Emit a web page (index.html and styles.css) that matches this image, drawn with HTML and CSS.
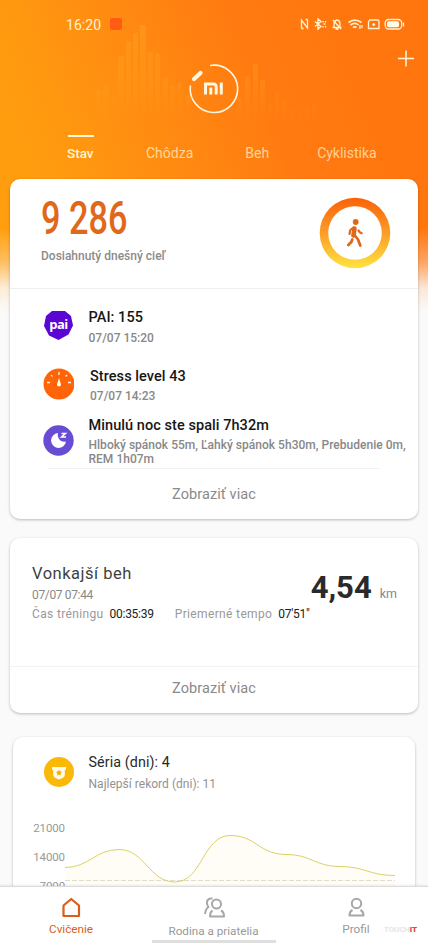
FILE: index.html
```html
<!DOCTYPE html>
<html lang="sk">
<head>
<meta charset="utf-8">
<meta name="viewport" content="width=device-width, initial-scale=1">
<title>Mi Fit</title>
<link rel="stylesheet" href="styles.css">
</head>
<body>
<div class="app">
  <svg class="skyline" viewBox="0 0 428 130" width="428" height="130" aria-hidden="true">
    <defs><linearGradient id="fade" x1="0" y1="20" x2="0" y2="122" gradientUnits="userSpaceOnUse"><stop offset="0" stop-color="#ffa621" stop-opacity=".46"/><stop offset=".6" stop-color="#ffa11b" stop-opacity=".3"/><stop offset="1" stop-color="#ffa11b" stop-opacity="0"/></linearGradient></defs>
    <path fill="url(#fade)" d="M96 90h5v28h-5zM103 84h6v34h-6zM111 96h6v22h-6zM118 56h6v62h-6zM126 41h5v77h-5zM133 33h5v85h-5zM140 25h6v93h-6zM148 52h5v66h-5zM155 54h5v64h-5zM163 77h5v41h-5zM170 85h5v33h-5zM178 83h5v37h-5zM186 94h5v26h-5zM237 98h5v22h-5zM245 76h5v44h-5zM253 64h5v56h-5zM260 80h5v40h-5zM268 104h4v16h-4zM275 93h4v27h-4zM282 102h4v18h-4zM290 110h4v10h-4zM298 111h4v9h-4zM305 107h4v13h-4zM312 104h4v16h-4z"/>
  </svg>
  <header class="status">
    <span class="clock">16:20</span>
    <span class="chip"></span>
    <svg class="status-icons" width="106" height="14" viewBox="0 0 106 14" fill="none" stroke="#fff3cf" stroke-width="1.300">
      <path d="M1.500 11.500V3L7.500 11V2.500M1.500 11.500h2M7.500 2.500h-2"/>
      <path d="M15 4.500l6 5-3 2.500V2l3 2.500-6 5M23 4v1.500M23 9v1.500M25.500 4v1.500M25.500 9v1.500M23.500 7h2"/>
      <path d="M32.500 10.500h9M34 10V6.500q.5-3 3-3.500 3 .500 3 4v3M35.500 12h3M33 3l8 9"/>
      <path d="M48.500 5.500q6.500-4.800 13 0M50.500 8q4.500-3.200 8 0M53 10.500q1.800-1.300 3.500 0" stroke-width="1.600"/><path d="M60 8v4M62 8v3"/>
      <path d="M70 3h7.500q1.500 0 1.500 1.500V11.500H68.500V4.500z"/><path d="M73.700 6v3M72.200 7.500h3"/>
      <rect x="85.200" y="2.500" width="16.500" height="9.500" rx="3.500"/><rect x="87" y="4.200" width="12" height="6" rx="1.800" fill="#fffde9" stroke="none"/><path d="M103.500 5.500v4"/>
    </svg>
  </header>
  <div class="hero">
    <svg class="logo" width="50" height="50" viewBox="0 0 50 50" fill="none" stroke="#fff7df">
      <path d="M21 1.500A23.700 23.700 0 1 1 1.500 21.500" stroke-width="1.600"/>
      <path d="M5 15l6.500-6" stroke-width="4.200" stroke-linecap="round"/>
      <path d="M16.500 30.500V20H24.500q2.700 0 2.700 3V30.500M21.800 23.500v7M32.300 18.500v12" stroke-width="3"/>
    </svg>
    <svg class="plus" width="18" height="18" viewBox="0 0 18 18" stroke="#fff3d3" stroke-width="1.600"><path d="M9 1.500v16M1 9.500h16"/></svg>
  </div>
  <nav class="tabs">
    <span class="tab active">Stav</span><span class="tab">Chôdza</span><span class="tab">Beh</span><span class="tab">Cyklistika</span>
  </nav>

  <section class="card daily">
    <div class="summary">
      <div><div class="steps">9 286</div><div class="goal">Dosiahnutý dnešný cieľ</div></div>
      <svg class="ring" width="72" height="72" viewBox="0 0 72 72">
        <defs><linearGradient id="ringfill" x1="0" y1="0" x2="0" y2="1"><stop stop-color="#fa6108"/><stop offset=".5" stop-color="#fc9d28"/><stop offset=".85" stop-color="#fdcf38"/><stop offset="1" stop-color="#ffe33d"/></linearGradient></defs>
        <path fill="url(#ringfill)" fill-rule="evenodd" d="M36 .7a35.300 35.300 0 1 0 0 70.600a35.300 35.300 0 1 0 0-70.600zM36 9.200a26.800 26.800 0 1 1 0 53.600a26.800 26.800 0 1 1 0-53.600z"/>
        <g stroke="#df681b" fill="none" stroke-linecap="round" stroke-linejoin="round"><circle cx="36.700" cy="25" r="2.900" fill="#df681b" stroke="none"/><path d="M35.500 31.500l-1 7" stroke-width="4.600"/><path d="M34.500 30.500l-3.200 2.500-.8 4M39.500 33.500l1.200 1.700 2 1" stroke-width="2.200"/><path d="M35.500 38l3.500 4.500 2.300 6M33.300 42.500l-1 2.500-3 3" stroke-width="2.800"/></g>
      </svg>
    </div>
    <div class="entries">
      <div class="entry pai-row">
        <svg class="badge" width="32" height="32" viewBox="0 0 32 32"><path d="M10 2h13l6 5 2 9.500-4.500 9L16.500 31 7 26.500 2 17 4 7z" fill="#5b06d2"/><text class="pai-text" x="16.500" y="20" text-anchor="middle">pai</text></svg>
        <div><h3>PAI: 155</h3><p>07/07 15:20</p></div>
      </div>
      <div class="entry stress-row">
        <svg class="badge" width="32" height="32" viewBox="0 0 32 32"><circle cx="17" cy="16" r="15.500" fill="#ff6408"/><path d="M5 14.500h3M26 14.500h3M17 4v3M9 7l1.500 1.500M25 7l-1.500 1.500" stroke="#fff2d8" stroke-width="1.300"/><path d="M17 10l2 6.500a2 2 0 1 1-4 0z" fill="#fffbe8"/></svg>
        <div><h3>Stress level 43</h3><p>07/07 14:23</p></div>
      </div>
      <div class="entry sleep-row">
        <svg class="badge" width="32" height="32" viewBox="0 0 32 32"><circle cx="16.500" cy="16.500" r="15.200" fill="#684cd4"/><path d="M16 9a7.500 7.500 0 1 0 8 8.500q-5 1-7-2.500t-1-6z" fill="#fff"/><path d="M19.500 9.500h4l-4 3.500h4.500" fill="none" stroke="#fff" stroke-width="1.500"/></svg>
        <div><h3>Minulú noc ste spali 7h32m</h3><p>Hlboký spánok 55m, Ľahký spánok 5h30m, Prebudenie 0m,<br>REM 1h07m</p></div>
      </div>
    </div>
    <div class="more">Zobraziť viac</div>
  </section>

  <section class="card run">
    <div class="run-body">
      <div class="run-info">
        <h2>Vonkajší beh</h2>
        <div class="date">07/07 07:44</div>
        <div class="stats"><span class="label">Čas tréningu</span><b class="time">00:35:39</b><span class="label pace">Priemerné tempo</span><b class="pace-value">07'51"</b></div>
      </div>
      <div class="distance"><strong>4,54</strong><span>km</span></div>
    </div>
    <div class="more">Zobraziť viac</div>
  </section>

  <section class="card streak">
    <div class="streak-head">
      <svg width="30" height="30" viewBox="0 0 30 30"><circle cx="15" cy="15" r="15" fill="#fab809"/><path d="M8 10h14v2.800h-1.200v5.200q0 2.500-5.800 4.500Q9.200 20.500 9.200 18v-5.200H8z" fill="#fffbe8"/><path d="M15 12.500l1 1.900 2.100.3-1.500 1.500.3 2.200-1.900-1-1.900 1 .3-2.200-1.500-1.500 2.100-.3z" fill="#f0ae0b"/></svg>
      <div><h2>Séria (dni): 4</h2><p>Najlepší rekord (dni): 11</p></div>
    </div>
    <div class="chart">
      <div class="axis"><span>21000</span><span>14000</span><span>7000</span></div>
      <svg width="330" height="66" viewBox="0 0 330 66" fill="none">
        <path d="M0 46.500C24 46.500 30 28.500 54 28.500C80 28.500 84 61 110 61C137 61 138 14.500 165 14.500C192 14.500 193 33.500 222 33.500C246 33.500 250 45.500 275 45.500C300 45.500 304 54.500 330 54.500V66H0z" fill="#fffdf5"/>
        <path d="M0 59.500h330" stroke="#dedbd0" stroke-dasharray="5 2"/>
        <path d="M0 46.500C24 46.500 30 28.500 54 28.500C80 28.500 84 61 110 61C137 61 138 14.500 165 14.500C192 14.500 193 33.500 222 33.500C246 33.500 250 45.500 275 45.500C300 45.500 304 54.500 330 54.500" stroke="#ddd064"/>
      </svg>
    </div>
  </section>

  <footer class="bottom">
    <div class="nav-item selected"><svg width="22" height="22" viewBox="0 0 22 22" fill="none" stroke="#dc5c18" stroke-width="2.200" stroke-linejoin="round"><path d="M3.500 19V8.500L11.200 2 19 8.500V19z"/></svg><span>Cvičenie</span></div>
    <div class="nav-item family"><svg width="24" height="22" viewBox="0 0 24 22" fill="none" stroke="#a8a8a8" stroke-width="2" stroke-linejoin="round"><circle cx="14.500" cy="7" r="4.500"/><path d="M10.500 13.500q-2.500 1.500-2.500 6h14q0-4.500-3-6M10.500 1.500Q6 .8 5 4.500q-.5 3 1.500 5.500-3 2-3.500 7"/></svg><span>Rodina a priatelia</span></div>
    <div class="nav-item profile"><svg width="20" height="22" viewBox="0 0 20 22" fill="none" stroke="#a8a8a8" stroke-width="2" stroke-linejoin="round"><circle cx="10.500" cy="6.500" r="4.700"/><path d="M6.500 13Q3.500 14.500 3.500 18.500h14q0-4-3-5.500"/></svg><span>Profil</span></div>
    <div class="watermark">TOUCH<b>IT</b></div>
    <div class="home-bar"></div>
  </footer>
</div>
</body>
</html>
```

FILE: styles.css
```css
* { box-sizing: border-box; }
body { margin: 0; background: #fafafa; font-family: Roboto, "Liberation Sans", sans-serif; }
h2, h3, p { margin: 0; }
svg { display: block; flex: none; }
.app {
  position: relative; width: 428px; height: 943px; overflow: hidden;
  background:
    linear-gradient(to bottom, rgba(250,250,250,0) 228px, rgba(250,250,250,.35) 262px, rgba(250,250,250,.85) 288px, #fafafa 312px),
    linear-gradient(68deg, #ffa00e 0, #ff9b0f 110px, #ff8a12 230px, #ff7b11 330px, #ff760f 430px) top / 428px 330px no-repeat #fafafa;
}
.skyline { position: absolute; top: 0; left: 0; }
.status { position: relative; display: flex; align-items: center; height: 48px; padding-left: 66px; }
.clock { width: 35px; padding-top: 1px; color: #fff3d2; font-size: 14px; letter-spacing: .05px; white-space: nowrap; }
.chip { width: 12px; height: 12px; margin-left: 9px; border-radius: 2px; background: #ff5b12; }
.status-icons { margin-left: 178px; }
.hero { position: relative; display: flex; height: 84px; padding: 16px 13px 0 189px; justify-content: space-between; }
.plus { margin-top: -15px; }
.tabs { position: relative; display: flex; height: 48px; padding-left: 67px; color: rgba(255,246,205,.72); font-size: 14px; line-height: 16px; }
.tab { padding-top: 13px; }
.tab:nth-child(2) { margin-left: 52px; }
.tab:nth-child(3) { margin-left: 52px; }
.tab:nth-child(4) { margin-left: 48px; }
.tab.active { position: relative; color: #fff6cf; font-weight: 500; font-size: 13.500px; width: 27px; }
.tab.active::before { content: ""; position: absolute; top: 3px; left: 1px; width: 26px; height: 2px; background: #fff8d9; }
.card { position: relative; width: 408px; margin: 0 auto; background: #fff; border-radius: 10px; box-shadow: 0 1px 3px rgba(0,0,0,.26); }
.daily { height: 340px; margin-top: -1px; }
.summary { display: flex; justify-content: space-between; height: 110px; padding: 15px 27px 0 31px; border-bottom: 1px solid #efefef; }
.ring { margin-top: 3px; }
.steps { width: 130px; height: 48px; color: #df681b; font-size: 46px; font-weight: 500; line-height: 48px; white-space: nowrap; transform: scaleX(.745); transform-origin: left; }
.goal { margin-top: 7px; color: #8b8b8b; font-size: 12px; font-weight: 500; line-height: 14px; }
.entries { height: 180px; margin: 0 38px; border-bottom: 1px solid #f3f3f3; }
.entry { display: flex; white-space: nowrap; margin-left: -6px; }
.entry > div { padding-left: .5px; }
.entry h3 { color: #171717; font-size: 14.500px; font-weight: 500; line-height: 18px; letter-spacing: .06px; }
.entry p { color: #888; font-size: 12px; font-weight: 500; line-height: 14px; letter-spacing: 0; }
.pai-row { padding-top: 20px; height: 79px; gap: 14px; }
.pai-row p { margin-top: 4px; }
.stress-row { height: 49px; gap: 15px; }
.stress-row > div { padding-left: 1px; }
.stress-row p { margin-top: 3px; }
.sleep-row { gap: 14px; }
.sleep-row .badge { margin-top: 7px; }
.sleep-row p { margin-top: 3px; font-size: 12px; letter-spacing: .02px; }
.pai-text { fill: #fff; font: 700 13px "Open Sans", sans-serif; letter-spacing: -.5px; }
.more { text-align: center; color: #8a8a8a; font-size: 14.500px; line-height: 52px; letter-spacing: .08px; }
.run { height: 175px; margin-top: 19px; }
.run-body { display: flex; justify-content: space-between; height: 129px; padding: 25px 21px 0 22px; border-bottom: 1px solid #f3f3f3; }
.run .more { line-height: 44px; }
.run-info h2 { color: #3f3f3f; font-size: 16.500px; font-weight: 400; letter-spacing: .5px; line-height: 21px; }
.date { margin-top: 4px; color: #888; font-size: 12px; line-height: 14px; letter-spacing: -.35px; }
.stats { display: flex; margin-top: 5px; font-size: 12px; line-height: 14px; white-space: nowrap; color: #999; letter-spacing: .35px; }
.stats b { margin-left: 6px; color: #202020; font-weight: 400; letter-spacing: -.25px; }
.pace { margin-left: 21px; }
.distance { display: flex; align-items: baseline; height: 45px; margin-top: 5px; gap: 8px; color: #2a2a2a; }
.distance strong { font-size: 31px; line-height: 40px; font-weight: 700; }
.distance span { color: #888; font-size: 12.500px; }
.streak { width: 402px; height: 210px; margin-top: 24px; margin-left: 13px; }
.streak-head { display: flex; gap: 14px; padding: 15px 0 0 31px; }
.streak-head svg { margin-top: 5px; }
.streak-head > div { padding-left: .5px; }
.streak-head h2 { color: #292929; font-size: 14.300px; font-weight: 400; line-height: 20px; letter-spacing: .1px; }
.streak-head p { margin-top: 5px; color: #929292; font-size: 12px; line-height: 14px; letter-spacing: .02px; }
.chart { display: flex; margin-top: 30px; }
.axis { display: flex; flex-direction: column; align-items: flex-end; width: 52px; color: #999; font-size: 11.500px; line-height: 14px; gap: 15px; letter-spacing: -.1px; }
.bottom { position: absolute; left: 0; right: 0; bottom: 0; display: flex; height: 57px; background: #fff; border-top: 1px solid #dcdcdc; box-shadow: 0 -1px 2px rgba(0,0,0,.08); color: #999; font-size: 11.800px; }
.nav-item { display: flex; flex-direction: column; align-items: center; width: 142px; padding-top: 10px; line-height: 14px; white-space: nowrap; }
.nav-item span { margin-top: 3px; }
.selected { color: #dc5c18; font-size: 11.700px; }
.family { width: 143px; font-size: 11.700px; }
.family span { margin-top: 5px; }
.watermark { position: absolute; left: 384px; top: 37px; color: #e5e5e5; font: 700 8px/11px Roboto, sans-serif; letter-spacing: -.15px; }
.watermark b { color: #ed3f43; }
.home-bar { position: absolute; left: 152px; bottom: 0; width: 124px; height: 3px; background: #dfdfdf; }
```
